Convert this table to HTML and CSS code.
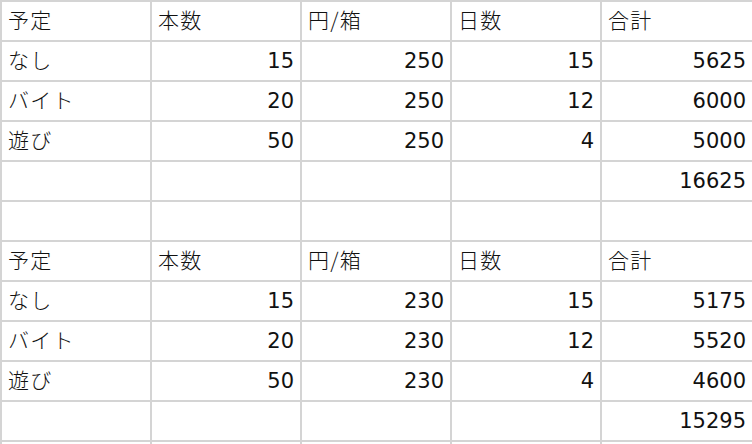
FILE: index.html
```html
<!DOCTYPE html>
<html lang="ja">
<head>
<meta charset="utf-8">
<link rel="stylesheet" href="styles.css">
</head>
<body>
<div class="sheet">
  <div class="c">予定</div><div class="c">本数</div><div class="c">円/箱</div><div class="c">日数</div><div class="c">合計</div>
  <div class="c">なし</div><div class="c n">15</div><div class="c n">250</div><div class="c n">15</div><div class="c n">5625</div>
  <div class="c">バイト</div><div class="c n">20</div><div class="c n">250</div><div class="c n">12</div><div class="c n">6000</div>
  <div class="c">遊び</div><div class="c n">50</div><div class="c n">250</div><div class="c n">4</div><div class="c n">5000</div>
  <div class="c"></div><div class="c"></div><div class="c"></div><div class="c"></div><div class="c n">16625</div>
  <div class="c"></div><div class="c"></div><div class="c"></div><div class="c"></div><div class="c"></div>
  <div class="c">予定</div><div class="c">本数</div><div class="c">円/箱</div><div class="c">日数</div><div class="c">合計</div>
  <div class="c">なし</div><div class="c n">15</div><div class="c n">230</div><div class="c n">15</div><div class="c n">5175</div>
  <div class="c">バイト</div><div class="c n">20</div><div class="c n">230</div><div class="c n">12</div><div class="c n">5520</div>
  <div class="c">遊び</div><div class="c n">50</div><div class="c n">230</div><div class="c n">4</div><div class="c n">4600</div>
  <div class="c"></div><div class="c"></div><div class="c"></div><div class="c"></div><div class="c n">15295</div>
  <div class="c"></div><div class="c"></div><div class="c"></div><div class="c"></div><div class="c"></div>
</div>
</body>
</html>
```
FILE: styles.css
```css
html, body {
  margin: 0;
  padding: 0;
  background: #ffffff;
  overflow: hidden;
}
.sheet {
  display: grid;
  grid-template-columns: 148px 148px 148px 148px 1fr;
  grid-auto-rows: 38px;
  gap: 2px;
  padding: 2px 0 0 2px;
  background: #d4d4d4;
  width: 750px;
  height: 442px;
  overflow: hidden;
  font-family: "Noto Sans CJK JP", "Noto Sans", sans-serif;
  font-weight: 300;
  font-size: 21px;
  color: #111111;
}
.c {
  background: #ffffff;
  line-height: 34px;
  padding: 0 6px;
  letter-spacing: 1.3px;
  white-space: nowrap;
  overflow: hidden;
}
.n {
  text-align: right;
  padding-right: 6px;
  letter-spacing: 0;
  line-height: 38px;
  font-family: "DejaVu Sans", "Noto Sans", sans-serif;
  font-weight: 400;
}
```
